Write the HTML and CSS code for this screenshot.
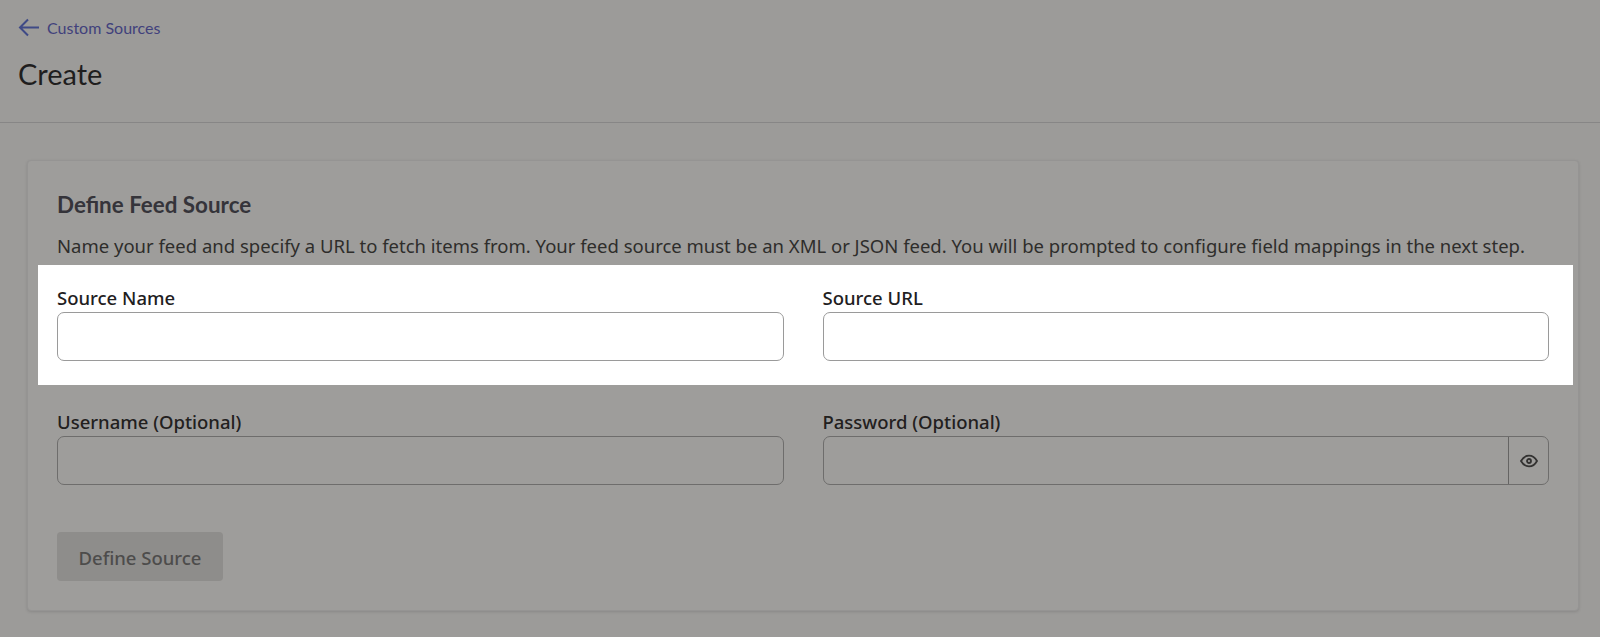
FILE: index.html
```html
<!DOCTYPE html>
<html lang="en">
<head>
<meta charset="utf-8">
<title>Create</title>
<link rel="stylesheet" href="styles.css">
</head>
<body>
<header class="page-header">
  <a class="back-link" href="#">
    <svg class="back-icon" viewBox="0 0 22 20" width="22" height="20" aria-hidden="true"><path d="M21 10.500H2M10 2.500l-8 8 8 8"/></svg>
    <span>Custom Sources</span>
  </a>
  <h1 class="page-title">Create</h1>
</header>
<main class="content">
  <section class="card">
    <h2 class="card-title">Define Feed Source</h2>
    <p class="card-desc">Name your feed and specify a URL to fetch items from. Your feed source must be an XML or JSON feed. You will be prompted to configure field mappings in the next step.</p>
    <div class="field-row field-row-lit">
      <div class="field">
        <label class="field-label">Source Name</label>
        <div class="input"></div>
      </div>
      <div class="field">
        <label class="field-label">Source URL</label>
        <div class="input"></div>
      </div>
    </div>
    <div class="field-row">
      <div class="field">
        <label class="field-label">Username (Optional)</label>
        <div class="input input-dim"></div>
      </div>
      <div class="field">
        <label class="field-label">Password (Optional)</label>
        <div class="input input-dim input-group">
          <div class="input-addon">
            <svg viewBox="0 0 20 20" width="20" height="20" aria-hidden="true" class="eye"><path d="M2 10c2-3.600 4.800-5.400 8-5.400s6 1.800 8 5.400c-2 3.600-4.800 5.400-8 5.400S4 13.600 2 10z"/><circle cx="10" cy="10" r="2"/></svg>
          </div>
        </div>
      </div>
    </div>
    <button class="submit" type="button">Define Source</button>
  </section>
</main>
</body>
</html>
```
FILE: styles.css
```css
* { box-sizing: border-box; }
html, body { margin: 0; height: 100%; }
body {
  background: #9c9b99;
  font-family: "Noto Sans", "Open Sans", sans-serif;
  color: #252422;
  overflow: hidden;
}
.page-header {
  height: 123px;
  padding: 17px 18px 0;
  border-bottom: 1px solid #878686;
}
.back-link {
  display: flex;
  align-items: center;
  gap: 7px;
  height: 20px;
  color: #41417c;
  font-family: Lato, sans-serif;
  font-size: 16px;
  text-decoration: none;
}
.back-icon { fill: none; stroke: #3f4a86; stroke-width: 2; }
.page-title {
  margin: 18px 0 0;
  font-family: Lato, sans-serif;
  font-size: 29px;
  line-height: 38px;
  font-weight: 400;
  color: #1f1e1e;
}
.content { padding: 37px 21px 0 27px; }
.card {
  height: 451px;
  padding: 30px 29px 0;
  background: #9e9d9b;
  border: 1px solid #959493;
  border-radius: 4px;
  box-shadow: 0 1px 3px rgba(0, 0, 0, .12);
}
.card-title {
  margin: 0;
  font-family: Lato, sans-serif;
  font-size: 22.400px;
  line-height: 28px;
  font-weight: 700;
  color: #35343a;
}
.card-desc {
  margin: 14px 0 0;
  font-size: 18.500px;
  line-height: 26px;
  white-space: nowrap;
  color: #2e2d2b;
}
.field-row {
  display: grid;
  grid-template-columns: 726.500px 726.500px;
  column-gap: 39px;
  padding: 0 24px 24px 19px;
  margin: 0 -24px 0 -19px;
}
.field-row-lit {
  margin-top: 6px;
  padding-top: 20px;
  background: #fff;
}
.field-row:not(.field-row-lit) { padding-top: 24px; }
.field-label {
  display: block;
  height: 27px;
  font-size: 18.500px;
  line-height: 26px;
  font-weight: 500;
  color: #22201e;
}
.input {
  height: 49px;
  background: #fff;
  border: 1px solid #9a9a9a;
  border-radius: 7px;
}
.input-dim {
  background: transparent;
  border-color: #6e6d6c;
}
.input-group { display: flex; justify-content: flex-end; }
.input-addon {
  width: 40px;
  display: flex;
  align-items: center;
  justify-content: center;
  border-left: 1px solid #656463;
}
.eye { fill: none; stroke: #333231; stroke-width: 1.800; }
.submit {
  display: block;
  width: 166px;
  height: 49px;
  margin-top: 23px;
  padding: 0;
  background: #8e8d8b;
  border: 0;
  border-radius: 4px;
  font-family: inherit;
  font-size: 18.500px;
  line-height: 51px;
  font-weight: 500;
  color: #4d4c4b;
}
```
